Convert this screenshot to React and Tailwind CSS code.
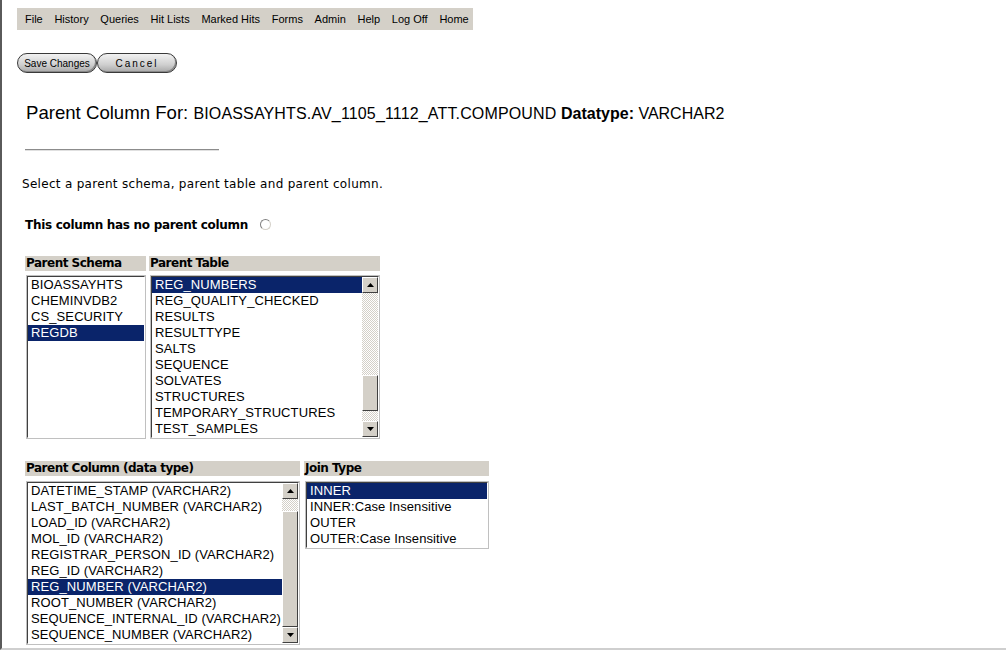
import { useState } from "react";

const menu = ["File", "History", "Queries", "Hit Lists", "Marked Hits", "Forms", "Admin", "Help", "Log Off", "Home"];

const schemas = ["BIOASSAYHTS", "CHEMINVDB2", "CS_SECURITY", "REGDB"];
const tables = [
  "REG_NUMBERS",
  "REG_QUALITY_CHECKED",
  "RESULTS",
  "RESULTTYPE",
  "SALTS",
  "SEQUENCE",
  "SOLVATES",
  "STRUCTURES",
  "TEMPORARY_STRUCTURES",
  "TEST_SAMPLES",
];
const columns = [
  "DATETIME_STAMP (VARCHAR2)",
  "LAST_BATCH_NUMBER (VARCHAR2)",
  "LOAD_ID (VARCHAR2)",
  "MOL_ID (VARCHAR2)",
  "REGISTRAR_PERSON_ID (VARCHAR2)",
  "REG_ID (VARCHAR2)",
  "REG_NUMBER (VARCHAR2)",
  "ROOT_NUMBER (VARCHAR2)",
  "SEQUENCE_INTERNAL_ID (VARCHAR2)",
  "SEQUENCE_NUMBER (VARCHAR2)",
];
const joins = ["INNER", "INNER:Case Insensitive", "OUTER", "OUTER:Case Insensitive"];

function ScrollButton({ up }) {
  return (
    <div className="w-[16px] h-[16px] shrink-0 bg-[#d4d0c8] border border-t-white border-l-white border-r-[#404040] border-b-[#404040] flex items-center justify-center">
      <svg width="7" height="4" viewBox="0 0 7 4">
        {up ? <polygon points="3.5,0 7,4 0,4" fill="#000" /> : <polygon points="0,0 7,0 3.5,4" fill="#000" />}
      </svg>
    </div>
  );
}

function Scrollbar({ before, thumb }) {
  return (
    <div className="w-[16px] flex flex-col shrink-0">
      <ScrollButton up />
      <div className="bg-[repeating-conic-gradient(#d4d0c8_0_25%,#ffffff_0_50%)] bg-[length:2px_2px]" style={{ height: before }} />
      <div className="bg-[#d4d0c8] border border-t-white border-l-white border-r-[#404040] border-b-[#404040]" style={{ height: thumb }} />
      <div className="flex-1 bg-[repeating-conic-gradient(#d4d0c8_0_25%,#ffffff_0_50%)] bg-[length:2px_2px]" />
      <ScrollButton />
    </div>
  );
}

function ListBox({ items, selected, width, rows, scroll }) {
  return (
    <div className="border border-[#c0c0c0]" style={{ width }}>
      <div className="border border-t-[#404040] border-l-[#404040] border-r-white border-b-white flex bg-white">
        <div className="flex-1 min-w-0" style={{ height: rows * 16 }}>
          {items.map((it) => (
            <div
              key={it}
              className={
                "h-[16px] leading-[16px] pl-[3px] text-[13px] tracking-[0.1px] whitespace-nowrap " +
                (it === selected ? "bg-[#0a246a] text-white" : "text-black")
              }
            >
              {it}
            </div>
          ))}
        </div>
        {scroll && <Scrollbar before={scroll[0]} thumb={scroll[1]} />}
      </div>
    </div>
  );
}

function PillButton({ children, className }) {
  return (
    <button
      className={
        "h-[20px] w-[80px] rounded-full border border-[#3a3a3a] bg-[linear-gradient(#f2f2f2,#cfcfcf_60%,#a8a8a8)] shadow-[inset_-1px_-1px_0_#888] text-[10px] text-black " +
        (className || "")
      }
    >
      {children}
    </button>
  );
}

function Header({ children }) {
  return (
    <div className="h-[15px] bg-[#d4d0c8] text-[12px] font-bold leading-[15px] pl-[1px] tracking-[-0.5px] font-['DejaVu_Sans',Verdana,sans-serif]">
      {children}
    </div>
  );
}

export default function App() {
  const [noParent, setNoParent] = useState(false);

  return (
    <div className="h-[650px] border-l-2 border-[#5a5a5a] border-b-2 border-b-[#cfcfcf] bg-white font-['Liberation_Sans',Arial,sans-serif] text-black">
      {/* top menu */}
      <div className="pt-[8px] pl-[15px]">
        <div className="w-[456px] h-[22px] bg-[#d4d0c8] flex items-center gap-[11.7px] pl-[8px] text-[11px] whitespace-nowrap">
          {menu.map((m) => (
            <span key={m}>{m}</span>
          ))}
        </div>
      </div>

      <div className="pl-[15px] pt-[23px] flex">
        <PillButton>Save Changes</PillButton>
        <PillButton className="tracking-[2px]">Cancel</PillButton>
      </div>

      <div className="pl-[24px] pt-[26px] whitespace-nowrap">
        <span className="text-[18.6px]">Parent Column For: </span>
        <span className="text-[16px] tracking-[0.15px]">BIOASSAYHTS.AV_1105_1112_ATT.COMPOUND </span>
        <span className="text-[16px] font-bold">Datatype: </span>
        <span className="text-[16px]">VARCHAR2</span>
      </div>

      <div className="ml-[23px] mt-[22px] w-[194px] border-t border-[#8c8c8c] border-b border-b-[#e0e0e0]" />

      <div className="pl-[20px] pt-[24px] text-[12px] tracking-[0.3px] font-['DejaVu_Sans',Verdana,sans-serif]">
        Select a parent schema, parent table and parent column.
      </div>

      <div className="pl-[23px] pt-[23px] flex items-center text-[12px] font-bold font-['DejaVu_Sans',Verdana,sans-serif] tracking-[-0.3px]">
        This column has no parent column
        <span
          onClick={() => setNoParent(!noParent)}
          className="ml-[12px] w-[11px] h-[11px] rounded-full border border-t-[#808080] border-l-[#808080] border-r-[#d4d0c8] border-b-[#d4d0c8] bg-white flex items-center justify-center"
        >
          {noParent && <span className="w-[4px] h-[4px] rounded-full bg-black" />}
        </span>
      </div>

      {/* schema / table */}
      <div className="pl-[23px] pt-[22px] flex gap-[3px]">
        <div className="w-[121px]">
          <Header>Parent Schema</Header>
          <div className="pt-[4px] pl-[1px]">
            <ListBox items={schemas} selected="REGDB" width={120} rows={10} />
          </div>
        </div>
        <div className="w-[231px]">
          <Header>Parent Table</Header>
          <div className="pt-[4px] pl-[1px]">
            <ListBox items={tables} selected="REG_NUMBERS" width={230} rows={10} scroll={[82, 36]} />
          </div>
        </div>
      </div>

      {/* column / join */}
      <div className="pl-[23px] pt-[22px] flex gap-[4px]">
        <div className="w-[275px]">
          <Header>Parent Column (data type)</Header>
          <div className="pt-[5px] pl-[1px]">
            <ListBox items={columns} selected="REG_NUMBER (VARCHAR2)" width={274} rows={10} scroll={[12, 116]} />
          </div>
        </div>
        <div className="w-[185px]">
          <Header>Join Type</Header>
          <div className="pt-[5px] pl-[1px]">
            <ListBox items={joins} selected="INNER" width={184} rows={4} />
          </div>
        </div>
      </div>
    </div>
  );
}
